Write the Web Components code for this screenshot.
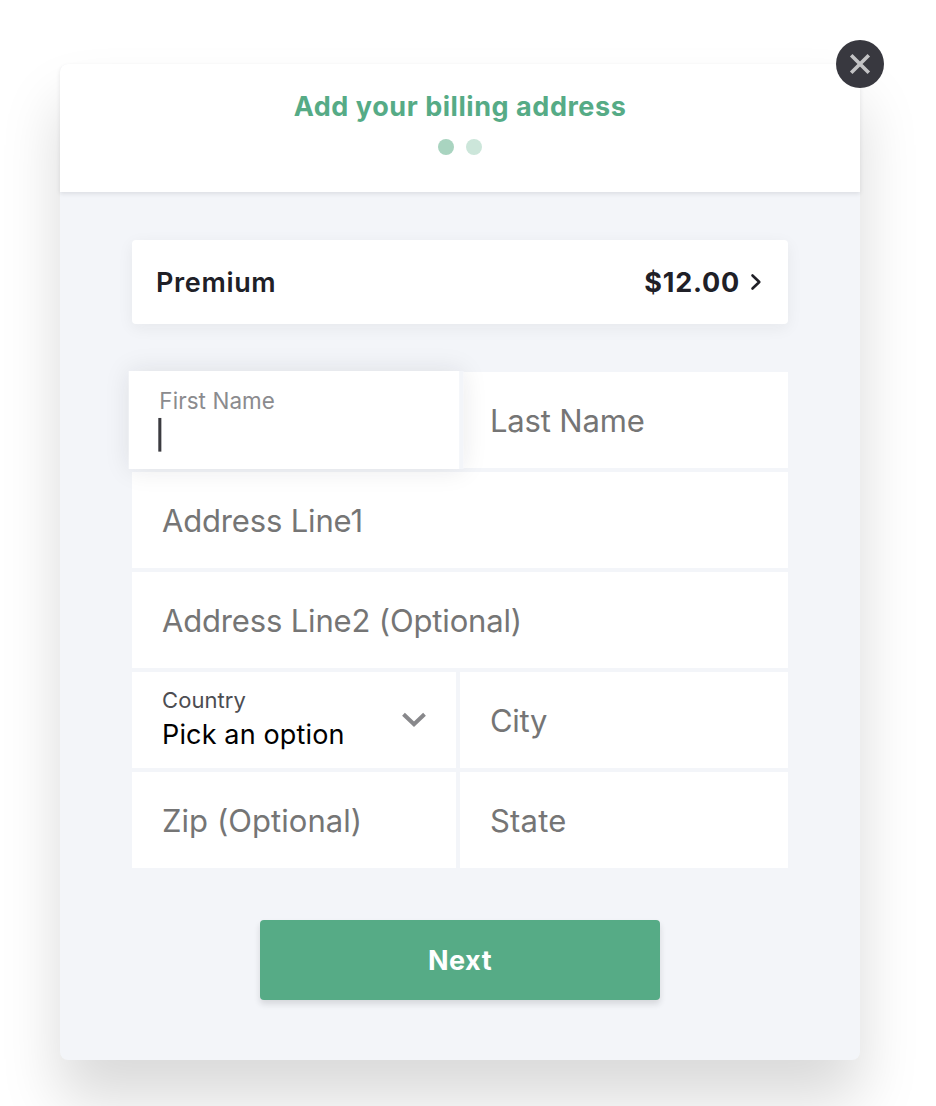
<!DOCTYPE html>
<html lang="en">
<head>
<meta charset="utf-8">
<title>Billing address</title>
<style>
    body {
        margin: 0;
        height: 1106px;
        overflow: hidden;
        background: #fff;
        font-family: Inter, "Liberation Sans", sans-serif;
        color: #202027;
    }

    billing-modal {
        margin: 64px 0 0 60px;
    }
</style>
</head>
<body>
<billing-modal>
    <step-header slot="header" steps="2" current="1">Add your billing address</step-header>
    <plan-summary price="$12.00">Premium</plan-summary>
    <address-form>
        <form-field label="First Name" focused></form-field>
        <form-field placeholder="Last Name"></form-field>
        <form-field placeholder="Address Line1" wide></form-field>
        <form-field placeholder="Address Line2 (Optional)" wide></form-field>
        <form-field label="Country" select>Pick an option</form-field>
        <form-field placeholder="City" style="--track: -0.3px"></form-field>
        <form-field placeholder="Zip (Optional)" style="--track: 0.05px"></form-field>
        <form-field placeholder="State" style="--track: 0.2px"></form-field>
    </address-form>
    <primary-button>Next</primary-button>
</billing-modal>

<script>
class BillingModal extends HTMLElement {
    constructor() {
        super();
        this.attachShadow({ mode: "open" });
        this.shadowRoot.innerHTML = `
<style>
    :host {
        display: flex;
        flex-direction: column;
        position: relative;
        width: 800px;
        height: 996px;
        border-radius: 8px;
        background: #f3f5f9;
        box-shadow: 0 40px 60px 0 rgba(0, 0, 0, 0.15);
    }

    .modal__body {
        display: flex;
        flex-direction: column;
        padding: 48px 72px 0;
    }

    .modal__close {
        position: absolute;
        top: -24px;
        right: -24px;
        z-index: 2;
        display: grid;
        place-items: center;
        width: 48px;
        height: 48px;
        padding: 0;
        border: 0;
        border-radius: 50%;
        background: #38383f;
    }
</style>
<slot name="header"></slot>
<div class="modal__body"><slot></slot></div>
<button class="modal__close" aria-label="Close">
    <svg width="24" height="24" viewBox="0 0 24 24" fill="none" stroke="#c3c3c5" stroke-width="3.6">
        <path d="M3.2 3.2 20.8 20.8M20.8 3.2 3.2 20.8"/>
    </svg>
</button>`;
    }
}

class StepHeader extends HTMLElement {
    constructor() {
        super();
        this.attachShadow({ mode: "open" });
        this.shadowRoot.innerHTML = `
<style>
    :host {
        display: flex;
        flex-direction: column;
        align-items: center;
        gap: 14px;
        box-sizing: border-box;
        height: 128px;
        padding-top: 25px;
        border-radius: 8px 8px 0 0;
        background: #fff;
        box-shadow: 0 2px 4px 0 rgba(32, 32, 39, 0.1);
    }

    .header__title {
        font-size: 27px;
        font-weight: 700;
        line-height: 36px;
        letter-spacing: 0.55px;
        color: #56ab86;
    }

    .header__steps {
        display: flex;
        gap: 12px;
    }

    .header__steps i {
        width: 16px;
        height: 16px;
        border-radius: 50%;
        background: #cce6da;
    }

    .header__steps i.current {
        background: #a9d4c0;
    }
</style>
<div class="header__title"><slot></slot></div>
<div class="header__steps"></div>`;
    }

    connectedCallback() {
        const steps = this.shadowRoot.querySelector(".header__steps");
        for (let i = 1; i <= Number(this.getAttribute("steps")); i++) {
            const dot = document.createElement("i");
            dot.classList.toggle("current", i === Number(this.getAttribute("current")));
            steps.appendChild(dot);
        }
    }
}

class PlanSummary extends HTMLElement {
    constructor() {
        super();
        this.attachShadow({ mode: "open" });
        this.shadowRoot.innerHTML = `
<style>
    :host {
        display: flex;
        align-items: center;
        box-sizing: border-box;
        height: 84px;
        padding: 0 24px;
        border-radius: 4px;
        background: #fff;
        box-shadow: 0 4px 16px 0 rgba(32, 32, 39, 0.06);
        font-size: 27px;
        line-height: 36px;
    }

    .plan__name {
        flex-grow: 1;
        padding-top: 2px;
        font-weight: 600;
        letter-spacing: 0.65px;
    }

    .plan__price {
        padding-top: 2px;
        font-weight: 700;
        letter-spacing: 0.8px;
    }

    svg {
        margin-left: 8px;
    }
</style>
<div class="plan__name"><slot></slot></div>
<div class="plan__price"></div>
<svg width="16" height="20" viewBox="0 0 16 20" fill="none" stroke="#202027" stroke-width="2.6" stroke-linecap="round" stroke-linejoin="round">
    <path d="M4.5 3.5 11.3 10 4.5 16.5"/>
</svg>`;
    }

    connectedCallback() {
        this.shadowRoot.querySelector(".plan__price").textContent = this.getAttribute("price");
    }
}

class AddressForm extends HTMLElement {
    constructor() {
        super();
        this.attachShadow({ mode: "open" });
        this.shadowRoot.innerHTML = `
<style>
    :host {
        display: grid;
        grid-template-columns: 328px 328px;
        grid-auto-rows: 96px;
        row-gap: 4px;
        margin-top: 48px;
    }

    /* left halves carry the column gutter as a border */
    ::slotted(:nth-child(1)),
    ::slotted(:nth-child(5)),
    ::slotted(:nth-child(7)) {
        border-right: 4px solid #f3f5f9;
    }

    ::slotted([wide]) {
        grid-column: 1 / -1;
    }
</style>
<slot></slot>`;
    }
}

class FormField extends HTMLElement {
    constructor() {
        super();
        this.attachShadow({ mode: "open" });
        this.shadowRoot.innerHTML = `
<style>
    :host {
        display: flex;
        align-items: center;
        box-sizing: border-box;
        padding: 0 30px;
        background: #fff;
    }

    :host([focused]) {
        position: relative;
        z-index: 1;
        padding-top: 2px;
        transform: scale(1.02);
        box-shadow: 0 0 24px 0 rgba(32, 32, 39, 0.1);
    }

    .field__text {
        flex-grow: 1;
        display: flex;
        flex-direction: column;
        gap: 3px;
    }

    .field__placeholder {
        padding-top: 2px;
        font-size: 31px;
        line-height: 40px;
        letter-spacing: var(--track, -0.16px);
        color: #757575;
    }

    .field__label {
        margin-top: -3px;
        font-size: 22px;
        line-height: 28px;
        letter-spacing: 0.08px;
        color: #4d4d52;
    }

    :host([focused]) .field__label {
        color: #8b8b8e;
    }

    .field__value {
        height: 34px;
        font-size: 27px;
        line-height: 35px;
        letter-spacing: 0.15px;
        color: #000;
    }

    .field__caret {
        width: 3px;
        height: 33px;
        margin-left: -1px;
        background: #3b3b40;
    }
</style>
<div class="field__text"></div>`;
    }

    connectedCallback() {
        const text = this.shadowRoot.querySelector(".field__text");
        if (this.hasAttribute("placeholder")) {
            text.innerHTML = `<div class="field__placeholder">${this.getAttribute("placeholder")}</div>`;
            return;
        }
        const value = this.hasAttribute("focused") ? `<div class="field__caret"></div>` : `<slot></slot>`;
        text.innerHTML = `
<div class="field__label">${this.getAttribute("label")}</div>
<div class="field__value">${value}</div>`;
        if (this.hasAttribute("select")) {
            text.insertAdjacentHTML("afterend", `
<svg width="24" height="16" viewBox="0 0 24 16" fill="none" stroke="#88888b" stroke-width="4">
    <path d="M1.5 2.2 12 12.2 22.5 2.2"/>
</svg>`);
        }
    }
}

class PrimaryButton extends HTMLElement {
    constructor() {
        super();
        this.attachShadow({ mode: "open" });
        this.shadowRoot.innerHTML = `
<style>
    :host {
        display: block;
        align-self: center;
        margin-top: 52px;
    }

    button {
        width: 400px;
        height: 80px;
        padding: 2px 0 0;
        border: 0;
        border-radius: 4px;
        background: #56ab86;
        box-shadow: 0 4px 6px 0 rgba(32, 32, 39, 0.14);
        font: 700 27px/36px Inter, sans-serif;
        letter-spacing: 0.5px;
        color: #fff;
    }
</style>
<button><slot></slot></button>`;
    }
}

customElements.define("billing-modal", BillingModal);
customElements.define("step-header", StepHeader);
customElements.define("plan-summary", PlanSummary);
customElements.define("address-form", AddressForm);
customElements.define("form-field", FormField);
customElements.define("primary-button", PrimaryButton);
</script>
</body>
</html>
